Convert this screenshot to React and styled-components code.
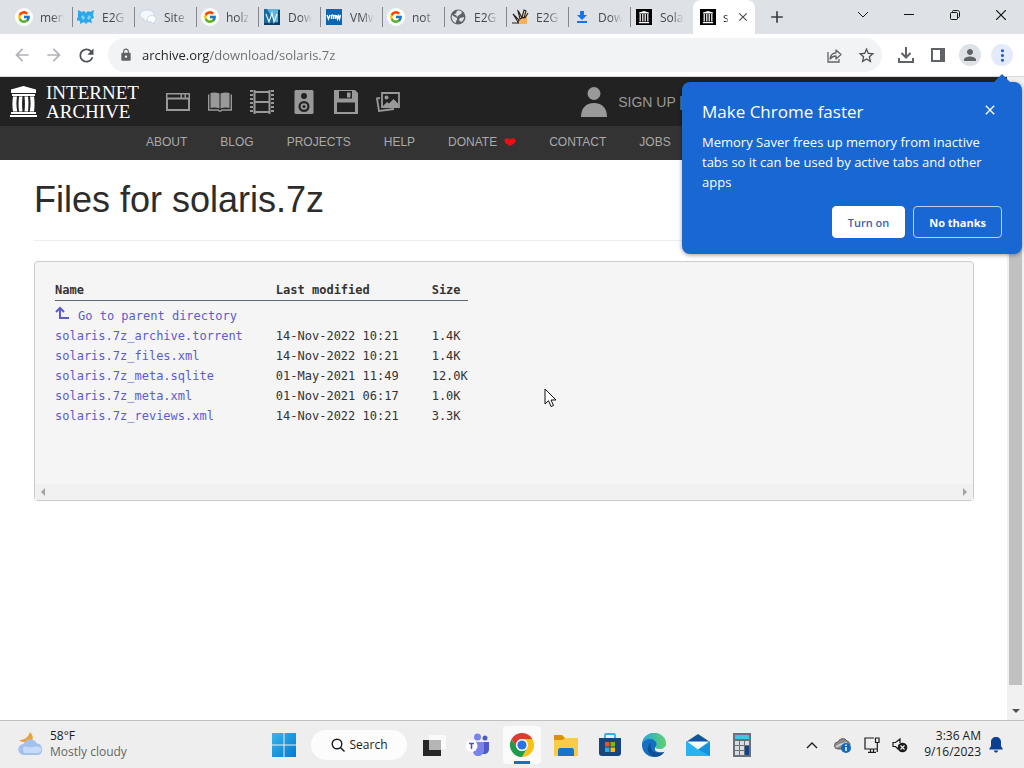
import React from "react";
//Styling
import styled, { createGlobalStyle } from "styled-components";
//ICONS
import { FcGoogle } from "react-icons/fc";
import { MdArrowBack, MdArrowForward, MdRefresh, MdLock, MdStarOutline, MdPerson, MdMoreVert, MdClose, MdAdd } from "react-icons/md";

//TAB ICONS
const Bear = () => (
    <svg width="18" height="16" viewBox="0 0 18 16">
        <path d="M1 1l4 2 2-1 2 2 2-2 2 1 4-2-1 5 1 3-3 1 1 4-4-1-2 2-2-2-4 2 0-3-4-1 2-3z" fill="#2ea7e8" />
        <path d="M4 8l2-2 2 3-2 2zM10 9l2-3 2 2-2 3z" fill="#7fd4fb" />
    </svg>
);

const Chat = () => (
    <svg width="18" height="16" viewBox="0 0 18 16">
        <path d="M8 1c4 0 7 2 7 5s-3 5-7 5l-3 2V10C2 9 1 8 1 6c0-3 3-5 7-5z" fill="#f4f9fe" stroke="#c6d8ea" />
        <path d="M10 7c3-1 7 0 7 3 0 1-1 2-2 3v2l-3-2c-3 0-4-1-4-3 0-1 1-2 2-3z" fill="#fff" stroke="#c6d8ea" />
    </svg>
);

const Pulse = () => (
    <svg width="16" height="16" viewBox="0 0 16 16">
        <rect width="16" height="16" fill="#17699f" />
        <path d="M3 0h13v13H11z" fill="#5fb4dc" />
        <path d="M0 14h16v2H0zM14 1h2v15h-2z" fill="#0d3c66" />
        <path d="M2 5l3 8 3-9 2 9 3-8" fill="none" stroke="#dff2fb" strokeWidth="1.2" />
    </svg>
);

const Vmw = () => (
    <svg width="16" height="16" viewBox="0 0 16 16">
        <rect width="16" height="16" fill="#0b67b2" />
        <path d="M1 6l1.500 4L4 6M5.500 10V6.500c1-1 2 0 2 1V10m0-2.500c1-1.500 2-1 2 0V10m1-4l1 4 1-3 1 3 1-4" fill="none" stroke="#fff" strokeWidth="1.4" />
    </svg>
);

const Globe = () => (
    <svg width="16" height="16" viewBox="0 0 16 16">
        <circle cx="8" cy="8" r="7.500" fill="#5f6368" />
        <path d="M2 6l3 2 2 1v2l-1 1v2C3 13 1 10 2 6zM7 2c2-1 4 0 5 1l-1 2-2 1-2 2-1-2H4l2-2zM10 9l4-1c0 2-1 4-3 5l-2-2z" fill="#dee1e6" />
    </svg>
);

const Sun = () => (
    <svg width="18" height="18" viewBox="0 0 18 18">
        <path d="M6 16c0-5 4-8 10-7v7z" fill="#f8b05c" />
        <path d="M1 15h7M2 6l6 6-1 2zM7 3l1 1 3 6-2 1zM13 2l2 1-2 7-2-1zM17 5l-3 5" fill="#f6d199" stroke="#26211c" strokeWidth="1.1" />
    </svg>
);

const BlueDown = () => (
    <svg width="14" height="14" viewBox="0 0 14 14">
        <path d="M5 1h4v4h3l-5 5-5-5h3zM2 11h10v2H2z" fill="#1a73e8" />
    </svg>
);

const Temple = () => (
    <svg width="27" height="31" viewBox="0 0 27 31" fill="#fff">
        <path d="M13.500 0L1 3.500V7h25V3.500zM2 8h23v2H2zM1 26h25v2H1zM0 29h27v2H0z" />
        <path d="M3 10.500h4c-.8 5-.8 10 .3 15H3c-.8-5-.8-10 0-15zM9 10.500h3.500c-.6 5-.6 10 0 15H9c-.6-5-.6-10 0-15zM14.500 10.500H18c.6 5 .6 10 0 15h-3.500c.6-5 .6-10 0-15zM20 10.500h4c.8 5 .8 10 0 15h-4.300c1.100-5 1.100-10 .3-15z" />
    </svg>
);

const TempleBox = () => (
    <svg width="16" height="16" viewBox="0 0 16 16">
        <rect width="16" height="16" fill="#000" />
        <path d="M8 2l5 1.500v1H3v-1zM3 13h10v1.200H3z" fill="#fff" />
        <path d="M3.500 5H5v7.500H3.500zM6 5h1.500v7.500H6zM8.500 5H10v7.500H8.500zM11 5h1.500v7.500H11z" fill="#cfcfcf" />
    </svg>
);

//TOOLBAR ICONS
const Share = () => (
    <svg width="18" height="18" viewBox="0 0 18 18" fill="none" stroke="#5f6368" strokeWidth="1.3">
        <path d="M3 6v10h11v-3" />
        <path d="M5 13c.5-4 3-6 6-6V4l5 4.500-5 4.500v-3c-3 0-4.500 1-6 3z" strokeLinejoin="round" />
    </svg>
);

const Download = () => (
    <svg width="18" height="18" viewBox="0 0 18 18" fill="none" stroke="#5f6368" strokeWidth="2">
        <path d="M9 1v10M4.500 7L9 11.500 13.500 7M2 12v4h14v-4" />
    </svg>
);

const SidePanel = () => (
    <svg width="16" height="16" viewBox="0 0 16 16">
        <path d="M2 2h12v12H2z" fill="none" stroke="#5f6368" strokeWidth="2" />
        <path d="M10 2h4v12h-4z" fill="#5f6368" />
    </svg>
);

//MEDIA ICONS
const WebIcon = () => (
    <svg width="24" height="24" viewBox="0 0 24 24">
        <path fill="#999" fillRule="evenodd" d="M0 3h24v18H0zM1.500 4.500v3h13v-3zM16 4.500v3h2.500v-3zM20 4.500v3h2.500v-3zM2 9.500v9.500h20V9.500z" />
    </svg>
);

const BookIcon = () => (
    <svg width="24" height="24" viewBox="0 0 24 24">
        <path fill="#999" d="M2.500 3Q7 2 11.500 3.500V18.500Q7 17 2.500 18zM21.500 3Q17 2 12.500 3.500V18.500Q17 17 21.500 18z" />
        <path fill="none" stroke="#999" strokeWidth="1.4" d="M.7 4.500V20h9.500l1 1h1.600l1-1h9.500V4.500" />
    </svg>
);

const FilmIcon = () => (
    <svg width="24" height="24" viewBox="0 0 24 24" fill="none" stroke="#999">
        <path d="M1.500 0v24M22.500 0v24" strokeWidth="3" strokeDasharray="2 2" />
        <path d="M4.500 0v24M19.500 0v24M5 2h14M5 12h14M5 22h14" strokeWidth="2" />
    </svg>
);

const AudioIcon = () => (
    <svg width="24" height="24" viewBox="0 0 24 24">
        <rect x="2.500" width="19" height="24" rx="1.500" fill="#999" />
        <circle cx="12" cy="6" r="3" fill="#222" />
        <circle cx="12" cy="16.500" r="5.500" fill="#222" />
        <circle cx="12" cy="16.500" r="3.300" fill="#999" />
        <circle cx="12" cy="16.500" r="1.500" fill="#222" />
    </svg>
);

const FloppyIcon = () => (
    <svg width="24" height="24" viewBox="0 0 24 24">
        <path fill="#999" fillRule="evenodd" d="M0 0h21l3 3v21H0zM5 1v7.500h13V1zM3 12.500v9.500h18v-9.500z" />
        <path fill="#999" d="M13 2.500h3.500v5H13z" />
    </svg>
);

const ImagesIcon = () => (
    <svg width="24" height="24" viewBox="0 0 24 24">
        <path d="M4 8l-3 .5L3 21l15-2" fill="none" stroke="#999" strokeWidth="1.8" />
        <path d="M6 3h17v14H6z" fill="#222" stroke="#999" strokeWidth="1.8" />
        <circle cx="10.500" cy="7.500" r="2" fill="#999" />
        <path d="M7 16l4-4 2 1.500L17.500 9l5 5v3z" fill="#999" />
    </svg>
);

const UserIcon = () => (
    <svg width="26" height="30" viewBox="0 0 26 30" fill="#999">
        <circle cx="13" cy="6.500" r="6.500" />
        <path d="M0 30c0-9 5-14 13-14s13 5 13 14z" />
    </svg>
);

const Heart = () => (
    <svg width="12" height="8" viewBox="0 0 12 8">
        <path d="M6 8C3 6.500 .5 5 .5 2.500.5 0 4-.5 6 1.500 8-.5 11.500 0 11.500 2.500 11.500 5 9 6.500 6 8z" fill="#f00d14" />
    </svg>
);

const UpLevel = () => (
    <svg width="14" height="14" viewBox="0 0 14 14">
        <path d="M5 2v10h9M1 6l4-4 4 4" fill="none" stroke="#5c5ccf" strokeWidth="2" />
    </svg>
);

//TASKBAR ICONS
const Weather = () => (
    <svg width="26" height="24" viewBox="0 0 26 24">
        <path d="M12 0c3 3 4 7 1 10H4L1 8c5 0 9-2 11-8z" fill="#e8a33d" />
        <path d="M6 23a5.500 5.500 0 01-.5-11A7.500 7.500 0 0119 11.500a6 6 0 011.500 11.500z" fill="#a3c0ee" />
        <path d="M7 21a4 4 0 010-7c4 3 10-1 15 1 3 2 1 6-2 6z" fill="#c6dafa" />
    </svg>
);

const Windows = () => (
    <svg width="24" height="24" viewBox="0 0 24 24">
        <defs>
            <linearGradient id="win" x1="0" y1="0" x2="1" y2="1">
                <stop offset="0" stopColor="#37b7ed" />
                <stop offset="1" stopColor="#0578cf" />
            </linearGradient>
        </defs>
        <path fill="url(#win)" d="M0 0h11.500v11.500H0zM12.500 0H24v11.500H12.500zM0 12.500h11.500V24H0zM12.500 12.500H24V24H12.500z" />
    </svg>
);

const TaskView = () => (
    <svg width="24" height="24" viewBox="0 0 24 24">
        <path d="M7 2h17v14H7z" fill="#fafafa" />
        <path d="M1 7h18v16H1z" fill="#272727" />
        <path d="M7 7h12v10H7z" fill="#b5b5b5" />
    </svg>
);

const Teams = () => (
    <svg width="24" height="24" viewBox="0 0 24 24">
        <circle cx="11.500" cy="4" r="3.500" fill="#7b83eb" />
        <circle cx="19" cy="5" r="2.500" fill="#5059c9" />
        <path d="M15 9h8v7c0 3-2 5-5 5h-3z" fill="#5059c9" />
        <path d="M7 9h11v8c0 4-3 6-6 6s-5-2-5-5z" fill="#7b83eb" />
        <circle cx="5.500" cy="13" r="6" fill="#fff" />
        <path d="M3 10.500h5M5.500 10.500V16" stroke="#4b53bc" strokeWidth="1.5" />
    </svg>
);

const Chrome = () => (
    <svg width="24" height="24" viewBox="0 0 24 24">
        <path d="M12 6h10.400A12 12 0 0112 24l5.200-9z" fill="#fbc116" />
        <path d="M1.600 6l5.200 9a6 6 0 0010.400 0L12 24A12 12 0 011.600 6z" fill="#1e9b4c" />
        <path d="M1.600 6A12 12 0 0122.400 6H12a6 6 0 00-5.200 9z" fill="#dd3b2f" />
        <circle cx="12" cy="12" r="6" fill="#fff" />
        <circle cx="12" cy="12" r="4.600" fill="#2b72e6" />
    </svg>
);

const Folder = () => (
    <svg width="26" height="24" viewBox="0 0 26 24">
        <path d="M1 2h8l3 3h13v10H1z" fill="#d9920f" />
        <path d="M1 7h9l2-2h13v18H1z" fill="#fbcb45" />
        <path d="M5 23v-5c0-2 1-3 2-3h12c1 0 2 1 2 3v5z" fill="#1872c9" />
    </svg>
);

const Store = () => (
    <svg width="24" height="24" viewBox="0 0 24 24">
        <path d="M7 6V2c0-.6.400-1 1-1h8c.6 0 1 .4 1 1v4" fill="none" stroke="#35b0e8" strokeWidth="1.8" />
        <path d="M1 5h22v15c0 2-1 3-3 3H4c-2 0-3-1-3-3z" fill="#17467c" />
        <path d="M7 9h4.500v4.500H7z" fill="#f25022" />
        <path d="M12.500 9H17v4.500h-4.500z" fill="#7fba00" />
        <path d="M7 14.500h4.500V19H7z" fill="#27a9ea" />
        <path d="M12.500 14.500H17V19h-4.500z" fill="#ffb900" />
    </svg>
);

const Edge = () => (
    <svg width="24" height="24" viewBox="0 0 24 24">
        <defs>
            <linearGradient id="edge" x1="0" y1="0" x2="1" y2="0">
                <stop offset="0" stopColor="#26a6df" />
                <stop offset="1" stopColor="#5fd36b" />
            </linearGradient>
        </defs>
        <circle cx="12" cy="12" r="12" fill="#1371c4" />
        <path d="M0 11C1 4 6 0 12 0c7 0 12 5 12 10 0 4-3 6-6 6-3 0-4.500-1-4.500-2s1-1.500 1-3C14.500 8 11 6 8 6c-4 0-7 2-8 5z" fill="url(#edge)" />
        <path d="M9 10c-2 6 3 12 12 9 1-.4 1.500 0 1 .6C17 26 8 25 6 18c-1-4 1-7 3-8z" fill="#104d92" />
        <path d="M13.500 14c0 1 1.500 2 4.500 2 3 0 5-2 6-4 1 3-1 6-2 7-6 1-11-1-8.500-5z" fill="#eee" />
    </svg>
);

const Mail = () => (
    <svg width="24" height="24" viewBox="0 0 24 24">
        <path d="M0 9l12-8 12 8v5H0z" fill="#12539d" />
        <path d="M0 9h24v14H0z" fill="#27b3ef" />
        <path d="M24 9L12 16.500 24 23z" fill="#1591df" />
        <path d="M1 8.500h22l-11 8z" fill="#f6fbff" />
    </svg>
);

const Calculator = () => (
    <svg width="18" height="24" viewBox="0 0 18 24">
        <rect width="18" height="24" fill="#68717a" />
        <path d="M2 2h14v4H2z" fill="#45c1ee" />
        <path d="M2 8h4v4H2zM7 8h4v4H7zM12 8h4v4h-4zM2 13h4v4H2zM7 13h4v4H7zM2 18h4v4H2zM7 18h4v4H7z" fill="#d9dde0" />
        <path d="M12 13h4v9h-4z" fill="#14418c" />
    </svg>
);

const CloudInfo = () => (
    <svg width="18" height="16" viewBox="0 0 18 16">
        <path d="M4 12a3.500 3.500 0 010-7 5 5 0 019-1c2 .5 3 2 3 4l-6 4z" fill="#8b8b8b" stroke="#5d5d5d" />
        <path d="M2 10c4-3 7-3 11-4" fill="none" stroke="#d0d0d0" strokeWidth="2" />
        <circle cx="12" cy="11" r="5" fill="#1268bd" />
        <path d="M12 7.500v1.500M12 10v4" stroke="#fff" strokeWidth="1.5" />
    </svg>
);

const Network = () => (
    <svg width="16" height="16" viewBox="0 0 16 16" fill="none" stroke="#1b1b1b" strokeWidth="1.2">
        <path d="M10 1H1v11h12M4 15.400h8M6.500 12v3M9.500 12v3M11.500 1H15v4.500h-3.500zM13.300 5.500V15" />
    </svg>
);

const Muted = () => (
    <svg width="16" height="16" viewBox="0 0 16 16">
        <path d="M7 10.500L6 12 3.500 9.500H1v-4h2.500L8 2v4" fill="none" stroke="#1b1b1b" strokeWidth="1.2" />
        <circle cx="10.500" cy="10.500" r="4.800" fill="#1b1b1b" />
        <path d="M8.500 8.500l4 4m0-4l-4 4" stroke="#eee" strokeWidth="1.2" />
    </svg>
);

const Bell = () => (
    <svg width="14" height="16" viewBox="0 0 14 16" fill="#0b3f91">
        <path d="M7 0c3 0 5 2 5 5v4l2 3.500H0L2 9V5c0-3 2-5 5-5zM5 13.500h4C9 15 8 15.500 7 15.500S5 15 5 13.500z" />
    </svg>
);

const Chevron = ({ up }) => (
    <svg width="12" height="8" viewBox="0 0 12 8" fill="none" stroke="#1b1b1b" strokeWidth={up ? "1.3" : "1"}>
        <path d={up ? "M1 7l5-5 5 5" : "M1 1l5 5 5-5"} />
    </svg>
);

//DATA
const tabs = [
    { title: "men", icon: <FcGoogle size={14} />, round: true },
    { title: "E2G", icon: <Bear /> },
    { title: "Site", icon: <Chat /> },
    { title: "holz", icon: <FcGoogle size={14} />, round: true },
    { title: "Dow", icon: <Pulse /> },
    { title: "VMw", icon: <Vmw /> },
    { title: "not", icon: <FcGoogle size={14} />, round: true },
    { title: "E2G", icon: <Globe /> },
    { title: "E2G", icon: <Sun /> },
    { title: "Dow", icon: <BlueDown /> },
    { title: "Sola", icon: <TempleBox /> },
];

const media = [
    { name: "Web", icon: <WebIcon /> },
    { name: "Texts", icon: <BookIcon /> },
    { name: "Video", icon: <FilmIcon /> },
    { name: "Audio", icon: <AudioIcon /> },
    { name: "Software", icon: <FloppyIcon /> },
    { name: "Images", icon: <ImagesIcon /> },
];

const links = ["ABOUT", "BLOG", "PROJECTS", "HELP", "DONATE", "CONTACT", "JOBS"];

const files = [
    { name: "solaris.7z_archive.torrent", date: "14-Nov-2022 10:21", size: "1.4K" },
    { name: "solaris.7z_files.xml", date: "14-Nov-2022 10:21", size: "1.4K" },
    { name: "solaris.7z_meta.sqlite", date: "01-May-2021 11:49", size: "12.0K" },
    { name: "solaris.7z_meta.xml", date: "01-Nov-2021 06:17", size: "1.0K" },
    { name: "solaris.7z_reviews.xml", date: "14-Nov-2022 10:21", size: "3.3K" },
];

const apps = [
    { name: "Task view", icon: <TaskView /> },
    { name: "Teams", icon: <Teams /> },
    { name: "Chrome", icon: <Chrome />, active: true },
    { name: "File Explorer", icon: <Folder /> },
    { name: "Store", icon: <Store /> },
    { name: "Edge", icon: <Edge /> },
    { name: "Mail", icon: <Mail /> },
    { name: "Calculator", icon: <Calculator /> },
];

const App = () => {
    return (
        <>
        <GlobalStyle />
        <Desktop>
            <TabStrip>
                {tabs.map((tab, i) => (
                    <Tab key={i}>
                        <Favicon $round={tab.round}>{tab.icon}</Favicon>
                        <TabTitle>{tab.title}</TabTitle>
                    </Tab>
                ))}
                <ActiveTab>
                    <Favicon><TempleBox /></Favicon>
                    <TabTitle $short>s</TabTitle>
                    <IconButton aria-label="Close tab" $size={16}><MdClose size={14} /></IconButton>
                </ActiveTab>
                <NewTab aria-label="New tab"><MdAdd size={20} /></NewTab>
                <WindowButtons>
                    <IconButton aria-label="Search tabs" $size={46}><Chevron /></IconButton>
                    <IconButton aria-label="Minimize" $size={46}>
                        <svg width="10" height="10" viewBox="0 0 10 10"><path d="M0 4.500h10" stroke="#111" /></svg>
                    </IconButton>
                    <IconButton aria-label="Restore" $size={46}>
                        <svg width="10" height="10" viewBox="0 0 10 10" fill="none" stroke="#111">
                            <rect x=".5" y="2.500" width="7" height="7" rx="1" />
                            <path d="M2.500 2.500V1.500c0-.6.400-1 1-1h4c1.200 0 2 .8 2 2v4c0 .6-.4 1-1 1h-1" />
                        </svg>
                    </IconButton>
                    <IconButton aria-label="Close" $size={46}>
                        <svg width="10" height="10" viewBox="0 0 10 10"><path d="M0 0l10 10M10 0L0 10" stroke="#111" strokeWidth="1.2" /></svg>
                    </IconButton>
                </WindowButtons>
            </TabStrip>
            <Toolbar>
                <IconButton aria-label="Back" $size={32} $color="#b0b3b6"><MdArrowBack size={20} /></IconButton>
                <IconButton aria-label="Forward" $size={32} $color="#b0b3b6"><MdArrowForward size={20} /></IconButton>
                <IconButton aria-label="Reload" $size={32}><MdRefresh size={21} /></IconButton>
                <Omnibox>
                    <MdLock size={14} color="#5f6368" />
                    <Address aria-label="Address" defaultValue="archive.org/download/solaris.7z" />
                    <IconButton aria-label="Share" $size={32}><Share /></IconButton>
                    <IconButton aria-label="Bookmark" $size={32}><MdStarOutline size={19} /></IconButton>
                </Omnibox>
                <IconButton aria-label="Downloads" $size={32}><Download /></IconButton>
                <IconButton aria-label="Side panel" $size={32}><SidePanel /></IconButton>
                <RoundButton aria-label="Profile"><MdPerson size={18} /></RoundButton>
                <RoundButton aria-label="Menu" $blue><MdMoreVert size={19} /></RoundButton>
            </Toolbar>
            <Viewport>
                <Page>
                    <TopNav>
                        <Logo href="#home">
                            <Temple />
                            <LogoText><span>INTERNET</span><span>ARCHIVE</span></LogoText>
                        </Logo>
                        <MediaLinks>
                            {media.map((item) => (
                                <a href="#media" aria-label={item.name} key={item.name}>{item.icon}</a>
                            ))}
                        </MediaLinks>
                        <SignUp href="#signup"><UserIcon />SIGN UP |</SignUp>
                    </TopNav>
                    <SubNav>
                        {links.map((link) => (
                            <NavLink href="#nav" key={link}>{link}{link === "DONATE" && <Heart />}</NavLink>
                        ))}
                    </SubNav>
                    <Content>
                        <Title>Files for solaris.7z</Title>
                        <Listing>
                            <FileTable>
                                <thead>
                                    <tr><th>Name</th><th>Last modified</th><th>Size</th></tr>
                                </thead>
                                <tbody>
                                    <tr>
                                        <td><ParentLink href="#parent"><UpLevel />Go to parent directory</ParentLink></td>
                                        <td></td>
                                        <td></td>
                                    </tr>
                                    {files.map((file) => (
                                        <tr key={file.name}>
                                            <td><a href="#file">{file.name}</a></td>
                                            <td>{file.date}</td>
                                            <td>{file.size}</td>
                                        </tr>
                                    ))}
                                </tbody>
                            </FileTable>
                            <ScrollX>
                                <svg width="6" height="8" viewBox="0 0 6 8"><path d="M5 0v8L1 4z" fill="#a3a3a3" /></svg>
                                <svg width="6" height="8" viewBox="0 0 6 8"><path d="M1 0v8l4-4z" fill="#a3a3a3" /></svg>
                            </ScrollX>
                        </Listing>
                    </Content>
                </Page>
                <ScrollY>
                    <Thumb />
                    <svg width="8" height="5" viewBox="0 0 8 5"><path d="M0 0h8L4 4z" fill="#505050" /></svg>
                </ScrollY>
            </Viewport>
            <Bubble role="dialog" aria-labelledby="bubble-title">
                <BubbleHead>
                    <h2 id="bubble-title">Make Chrome faster</h2>
                    <IconButton aria-label="Dismiss" $size={24} $color="#fff"><MdClose size={16} /></IconButton>
                </BubbleHead>
                <p>Memory Saver frees up memory from inactive tabs so it can be used by active tabs and other apps</p>
                <Actions>
                    <BubbleButton $primary>Turn on</BubbleButton>
                    <BubbleButton>No thanks</BubbleButton>
                </Actions>
            </Bubble>
            <Cursor width="13" height="20" viewBox="0 0 13 20">
                <path d="M1 1v15l3.500-3.300L7 18.500l2.500-1L7 12h5z" fill="#fff" stroke="#111" />
            </Cursor>
            <Taskbar>
                <WeatherWidget>
                    <Weather />
                    <div>
                        <div>58°F</div>
                        <Conditions>Mostly cloudy</Conditions>
                    </div>
                </WeatherWidget>
                <Apps>
                    <AppButton aria-label="Start"><Windows /></AppButton>
                    <Search>
                        <svg width="14" height="14" viewBox="0 0 14 14" fill="none" stroke="#1b1b1b" strokeWidth="1.4">
                            <circle cx="6" cy="6" r="4.800" /><path d="M9.500 9.500L13.500 13.500" />
                        </svg>
                        Search
                    </Search>
                    {apps.map((app) => (
                        <AppButton aria-label={app.name} $active={app.active} key={app.name}>{app.icon}</AppButton>
                    ))}
                </Apps>
                <Tray>
                    <Chevron up />
                    <StatusIcons><CloudInfo /><Network /><Muted /></StatusIcons>
                    <Clock><div>3:36 AM</div><div>9/16/2023</div></Clock>
                    <Bell />
                </Tray>
            </Taskbar>
        </Desktop>
        </>
    );
}//App end

//STYLE
const GlobalStyle = createGlobalStyle`
    *{
        box-sizing: border-box;
    }
    body{
        margin: 0;
        font-family: "Open Sans", "Noto Sans", sans-serif;
        font-size: 12px;
        color: #1b1b1b;
    }
    button, input{
        font: inherit;
        border: 0;
        padding: 0;
        background: none;
    }
    a{
        text-decoration: none;
    }
    svg{
        display: block;
        flex-shrink: 0;
    }
`;

const Desktop = styled.div`
    position: relative;
    display: flex;
    flex-direction: column;
    height: 100vh;
    overflow: hidden;
`;

const TabStrip = styled.div`
    display: flex;
    height: 34px;
    padding-left: 11px;
    background: #dee1e6;
`;

const Tab = styled.button`
    display: flex;
    align-items: center;
    gap: 7px;
    width: 62px;
    padding-left: 4px;
    color: #45494d;
    background: linear-gradient(#85898e, #85898e) right center / 1px 20px no-repeat;
    &:nth-child(11){
        background: none;
    }
`;

const Favicon = styled.span`
    display: flex;
    align-items: center;
    justify-content: center;
    flex-shrink: 0;
    width: 18px;
    height: 18px;
    border-radius: 9px;
    background: ${(props) => (props.$round ? "#fff" : "none")};
`;

const TabTitle = styled.span`
    width: ${(props) => (props.$short ? "6px" : "24px")};
    overflow: hidden;
    text-align: left;
    white-space: nowrap;
    mask-image: linear-gradient(90deg, #000 50%, transparent);
`;

const ActiveTab = styled.div`
    display: flex;
    align-items: center;
    gap: 6px;
    width: 62px;
    padding-left: 6px;
    border-radius: 8px 8px 0 0;
    background: #fff;
`;

const IconButton = styled.button`
    display: flex;
    align-items: center;
    justify-content: center;
    flex-shrink: 0;
    width: ${(props) => props.$size}px;
    color: ${(props) => props.$color || "#4c5055"};
`;

const NewTab = styled(IconButton)`
    width: 44px;
    color: #3c4043;
`;

const WindowButtons = styled.div`
    display: flex;
    height: 29px;
    margin-left: auto;
`;

const Toolbar = styled.div`
    display: flex;
    align-items: center;
    height: 43px;
    padding: 0 6px;
    background: #fff;
    border-bottom: 1px solid #d5dad9;
`;

const Omnibox = styled.div`
    display: flex;
    flex: 1;
    align-items: center;
    height: 34px;
    margin: 0 8px 0 6px;
    padding: 0 0 0 11px;
    border-radius: 17px;
    background: #f1f3f4;
`;

//The host is dark, the path after it is grey
const Address = styled.input`
    flex: 1;
    min-width: 0;
    margin-left: 9px;
    font-size: 13px;
    color: #202124;
    background: linear-gradient(90deg, #202124 68px, #6b6f73 68px) text;
    -webkit-text-fill-color: transparent;
`;

const RoundButton = styled(IconButton)`
    width: 22px;
    height: 22px;
    margin: 0 5px;
    border-radius: 11px;
    color: ${(props) => (props.$blue ? "#1967d2" : "#5f6368")};
    background: ${(props) => (props.$blue ? "#e3eafa" : "#dee1e6")};
`;

const Viewport = styled.div`
    display: flex;
    flex: 1;
    min-height: 0;
`;

const Page = styled.main`
    flex: 1;
    min-width: 0;
    background: #fff;
    font-family: "Liberation Sans", Arial, sans-serif;
`;

const TopNav = styled.header`
    display: flex;
    align-items: center;
    height: 49px;
    padding-left: 10px;
    background: #222;
`;

const Logo = styled.a`
    display: flex;
    align-items: center;
    gap: 9px;
    width: 156px;
`;

const LogoText = styled.span`
    display: flex;
    flex-direction: column;
    font-family: "Liberation Serif", serif;
    font-size: 19px;
    line-height: 19px;
    color: #fff;
`;

const MediaLinks = styled.nav`
    display: flex;
    gap: 18px;
`;

const SignUp = styled.a`
    display: flex;
    align-items: center;
    gap: 11px;
    margin-left: auto;
    margin-right: 324px;
    font-size: 14px;
    color: #999;
`;

const SubNav = styled.nav`
    display: flex;
    align-items: center;
    gap: 33px;
    height: 34px;
    padding: 0 0 2px 146px;
    background: #333;
`;

const NavLink = styled.a`
    display: flex;
    align-items: center;
    gap: 7px;
    color: #aaa;
`;

const Content = styled.div`
    padding: 16px 33px 0 34px;
`;

const Title = styled.h1`
    margin: 0 0 20px;
    padding-bottom: 16px;
    border-bottom: 1px solid #eee;
    font-size: 36px;
    font-weight: 400;
    line-height: 48px;
    color: #2c2c2c;
`;

const Listing = styled.div`
    display: flex;
    flex-direction: column;
    justify-content: space-between;
    min-height: 240px;
    padding-top: 18px;
    border: 1px solid #ccc;
    border-radius: 4px;
    background: #f5f5f5;
`;

const FileTable = styled.table`
    align-self: flex-start;
    margin-left: 20px;
    border-collapse: collapse;
    font-family: "DejaVu Sans Mono", monospace;
    font-size: 12px;
    line-height: 20px;
    color: #333;
    th{
        padding: 0 33px 0 0;
        border-bottom: 1px solid #5a6a70;
        text-align: left;
        font-weight: 700;
    }
    td{
        padding: 0 33px 0 0;
    }
    th:last-child, td:last-child{
        padding-right: 0;
    }
    tbody tr:first-child td{
        padding-top: 5px;
    }
    a{
        color: #5c5ccf;
    }
`;

const ParentLink = styled.a`
    display: flex;
    gap: 9px;
`;

const ScrollX = styled.div`
    display: flex;
    align-items: center;
    justify-content: space-between;
    height: 16px;
    padding: 0 5px;
    background: #f0f0f0;
`;

const ScrollY = styled.div`
    display: flex;
    flex-direction: column;
    align-items: center;
    width: 17px;
    padding: 17px 2px 6px;
    background: #f1f1f1;
`;

const Thumb = styled.div`
    flex: 1;
    width: 100%;
    margin-bottom: 24px;
    background: #c1c1c1;
`;

const Bubble = styled.section`
    position: absolute;
    top: 82px;
    right: 2px;
    width: 340px;
    padding: 16px 20px;
    border-radius: 8px;
    background: #1967d2;
    box-shadow: 0 1px 4px rgba(0,0,0,0.4);
    color: #fff;
    p{
        margin: 6px 0 14px;
        font-size: 13px;
        line-height: 20px;
    }
    &::before{
        content: "";
        position: absolute;
        top: -8px;
        right: 12px;
        border: 8px solid transparent;
        border-top: 0;
        border-bottom-color: #1967d2;
    }
`;

const BubbleHead = styled.div`
    display: flex;
    align-items: flex-start;
    justify-content: space-between;
    h2{
        margin: 0;
        font-size: 17px;
        font-weight: 400;
        line-height: 28px;
    }
    button{
        height: 24px;
    }
`;

const Actions = styled.div`
    display: flex;
    justify-content: flex-end;
    gap: 8px;
`;

const BubbleButton = styled.button`
    height: 32px;
    padding: 0 15px;
    border: 1px solid ${(props) => (props.$primary ? "#fff" : "#b9d0f2")};
    border-radius: 4px;
    font-size: 11px;
    font-weight: ${(props) => (props.$primary ? 600 : 700)};
    color: ${(props) => (props.$primary ? "#3a5fb4" : "#fff")};
    background: ${(props) => (props.$primary ? "#fff" : "none")};
`;

//The pointer floats over the page
const Cursor = styled.svg`
    position: absolute;
    top: 388px;
    left: 544px;
`;

const Taskbar = styled.footer`
    display: grid;
    grid-template-columns: 1fr auto 1fr;
    align-items: center;
    height: 48px;
    border-top: 1px solid #c0bfc2;
    background: #eee;
`;

const WeatherWidget = styled.div`
    display: flex;
    align-items: center;
    gap: 6px;
    padding: 0 0 2px 18px;
    line-height: 16px;
`;

const Conditions = styled.div`
    color: #666;
`;

const Apps = styled.div`
    display: flex;
    align-items: center;
    padding-left: 2px;
`;

const AppButton = styled.button`
    display: flex;
    align-items: center;
    justify-content: center;
    width: ${(props) => (props.$active ? "38px" : "44px")};
    height: 38px;
    margin: 0 ${(props) => (props.$active ? "3px" : "0")};
    border-radius: 4px;
    background: ${(props) => (props.$active ? "linear-gradient(#1673b9, #1673b9) center bottom / 16px 3px no-repeat, #fbfbfb" : "none")};
`;

const Search = styled.button`
    display: flex;
    align-items: center;
    justify-content: center;
    gap: 5px;
    width: 96px;
    height: 30px;
    margin: 0 5px;
    border-radius: 15px;
    background: #fcfcfc;
    color: #1b1b1b;
`;

const Tray = styled.div`
    display: flex;
    align-items: center;
    justify-content: flex-end;
    gap: 16px;
    padding-right: 21px;
`;

const StatusIcons = styled.div`
    display: flex;
    gap: 12px;
`;

const Clock = styled.div`
    margin-right: -8px;
    padding-bottom: 2px;
    text-align: right;
    line-height: 16px;
`;

export default App;
